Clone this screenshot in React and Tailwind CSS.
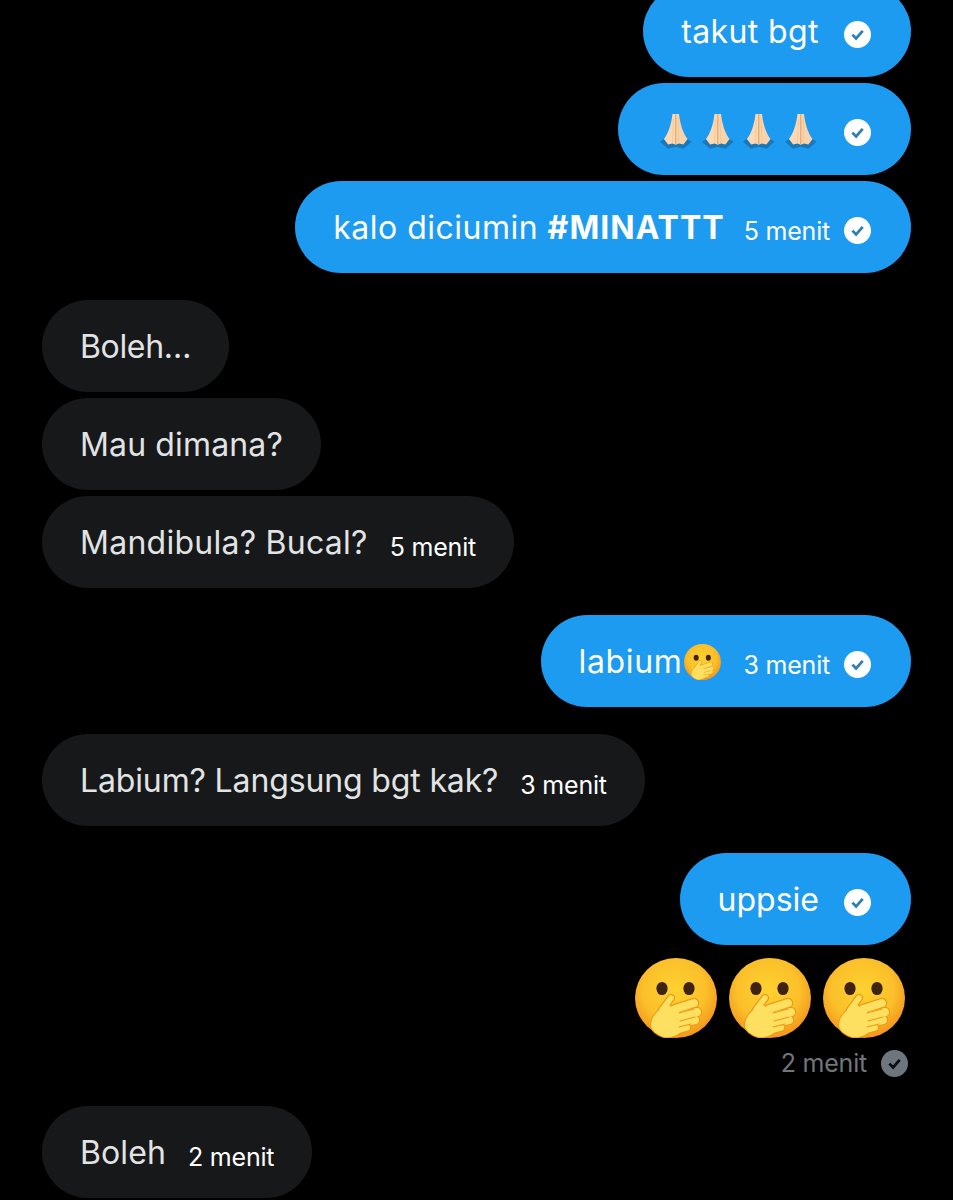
import { useId } from 'react'

function Check({ muted }) {
  return (
    <svg viewBox="0 0 27 27" className="w-[27px] h-[27px] shrink-0">
      <circle cx="13.5" cy="13.5" r="13.5" fill={muted ? '#6e767d' : '#ffffff'} />
      <path d="M8.4 13.6l3.7 3.9 6.6-7.6" fill="none" stroke={muted ? '#0b0c0d' : '#2f7fb8'} strokeWidth="2.8" />
    </svg>
  )
}

function Pray() {
  return (
    <svg viewBox="0 0 42 40" className="w-[41.5px] h-[40px] shrink-0">
      <path d="M5 31l4-3h24l4 3-8 7-8-2-8 2z" fill="#1a78b8" />
      <path d="M17.7 2.7H21V34l-3.3-1.3-4.4 1L9 28c3.6-4 7.6-14 8.7-25.3z" fill="#fbd9b5" />
      <path d="M24.3 2.7H21V34l3.3-1.3 4.4 1L33 28c-3.6-4-7.6-14-8.7-25.3z" fill="#f8d3ab" />
      <path d="M21 3v31" stroke="#eaa96b" strokeWidth="1.2" />
      <path d="M18.5 8l-.6 24M23.5 8l.6 24" stroke="#f4c796" strokeWidth="1" />
    </svg>
  )
}

function Face({ className }) {
  const id = useId()
  return (
    <svg viewBox="0 0 82 80" className={className}>
      <defs>
        <radialGradient id={id} cx="48%" cy="40%" r="60%">
          <stop offset="0%" stopColor="#fdd22f" />
          <stop offset="65%" stopColor="#fbbf2a" />
          <stop offset="100%" stopColor="#f3961c" />
        </radialGradient>
      </defs>
      <ellipse cx="41" cy="40" rx="41" ry="40" fill={`url(#${id})`} />
      <ellipse cx="27" cy="30.5" rx="5.6" ry="6.6" fill="#3e2212" />
      <ellipse cx="54" cy="30.5" rx="5.6" ry="6.6" fill="#3e2212" />
      <g fill="none" stroke="#ef9a17" strokeLinecap="round">
        <path d="M27 52l9-12" strokeWidth="8" />
        <path d="M40 51l19-6M42 59l20-5M42 66l18-4M40 72l11-3" strokeWidth="10.5" />
      </g>
      <path d="M16 68c0-10 8-18 18-21l14 10v14c-4 7-13 9-19 8-6-2-12-6-13-11z" fill="#ef9a17" stroke="#ef9a17" strokeWidth="2" />
      <g fill="none" stroke="#fde05f" strokeLinecap="round">
        <path d="M27 52l9-12" strokeWidth="5.5" />
        <path d="M40 51l19-6M42 59l20-5M42 66l18-4M40 72l11-3" strokeWidth="8" />
      </g>
      <path d="M16 68c0-10 8-18 18-21l14 10v14c-4 7-13 9-19 8-6-2-12-6-13-11z" fill="#fde05f" />
      <path d="M44 55l15-4M45 63l15-4M44 69l12-3" fill="none" stroke="#ef9a17" strokeWidth="1.2" strokeLinecap="round" />
    </svg>
  )
}

function Bubble({ me, time, check, children }) {
  return (
    <div className={`h-[92px] rounded-[46px] pl-[38px] flex items-center text-[32px] ${me ? 'bg-[#1d9bf0] text-white pr-[40px]' : 'bg-[#17181a] text-[#e2e3e4] pr-[38px]'}`}>
      <div className="flex items-center whitespace-nowrap mt-[1px]">{children}</div>
      {time && <span className={`ml-[22px] text-[25px] tracking-[-0.2px] text-white whitespace-nowrap ${me ? 'mt-[9px]' : 'mt-[12px]'}`}>{time}</span>}
      {check && <span className={`mt-[6px] ${time ? 'ml-[14px]' : 'ml-[25px]'}`}><Check /></span>}
    </div>
  )
}

export default function App() {
  return (
    <div className="w-[953px] h-[1200px] overflow-hidden bg-black px-[42px] [font-family:Inter,'Liberation_Sans',sans-serif]">
      <div className="-mt-[15px] flex flex-col gap-[27px]">
        <div className="flex flex-col items-end gap-[6px]">
          <Bubble me check><span className="tracking-[0.4px]">takut bgt</span></Bubble>
          <Bubble me check>
            <span className="flex mt-[2px] -ml-[1px] -mr-[2px]"><Pray /><Pray /><Pray /><Pray /></span>
          </Bubble>
          <Bubble me check time="5 menit">
            <span className="tracking-[0.5px]">kalo diciumin&nbsp;</span>
            <b className="font-bold tracking-[1px] -mr-[3px]">#MINATTT</b>
          </Bubble>
        </div>

        <div className="flex flex-col items-start gap-[6px]">
          <Bubble><span className="tracking-[-0.35px]">Boleh…</span></Bubble>
          <Bubble><span className="tracking-[0.14px]">Mau dimana?</span></Bubble>
          <Bubble time="5 menit"><span className="tracking-[0.26px]">Mandibula? Bucal?</span></Bubble>
        </div>

        <div className="flex justify-end">
          <Bubble me check time="3 menit">
            <span className="tracking-[0.65px]">labium</span>
            <Face className="w-[37px] h-[36px] ml-[2px]" />
          </Bubble>
        </div>

        <div className="flex justify-start">
          <Bubble time="3 menit"><span className="tracking-[-0.14px]">Labium? Langsung bgt kak?</span></Bubble>
        </div>

        <div className="flex flex-col items-end">
          <Bubble me check>uppsie</Bubble>
          <div className="mt-[13px] pr-[6px] flex gap-[12px]">
            <Face className="w-[82px] h-[80px]" />
            <Face className="w-[82px] h-[80px]" />
            <Face className="w-[82px] h-[80px]" />
          </div>
          <div className="mt-[10px] pr-[3px] h-[30px] flex items-center gap-[14px] text-[25px] tracking-[-0.2px] text-[#71767b]">
            <span className="mt-[1px]">2 menit</span>
            <Check muted />
          </div>
        </div>

        <div className="flex justify-start mt-[1px]">
          <Bubble time="2 menit"><span className="tracking-[0.1px]">Boleh</span></Bubble>
        </div>
      </div>
    </div>
  )
}
